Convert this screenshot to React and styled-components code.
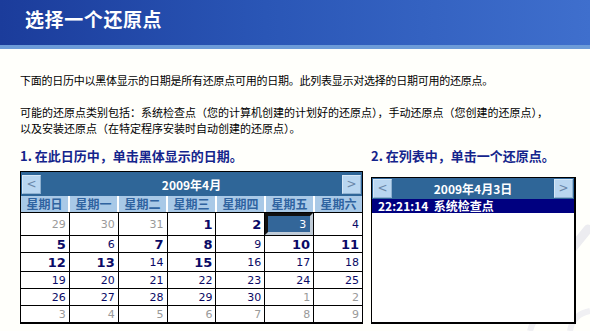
import React from 'react';
import styled, { createGlobalStyle } from 'styled-components';

const Global = createGlobalStyle`
  html, body { margin: 0; padding: 0; }
  body {
    background: #fffffb;
    font-family: "Noto Sans CJK SC", "DejaVu Sans", sans-serif;
    overflow: hidden;
  }
`;

const Page = styled.div`
  position: relative;
  width: 590px;
  height: 331px;
  overflow: hidden;
`;

const Header = styled.header`
  height: 37px;
  padding: 0 0 8px 25px;
  box-sizing: content-box;
  background: linear-gradient(to right, #1b3c9b 0%, #2a56b6 45%, #3f6fcd 100%);
  border-bottom: 4px solid #6c9bd8;
  display: flex;
  align-items: center;
  color: #fff;
  font-size: 19px;
  font-weight: 700;
  letter-spacing: 0.6px;
`;

const Body = styled.main`
  position: relative;
  z-index: 1;
  padding: 0 14px 0 20px;
`;

const Para = styled.p`
  margin: ${p => p.$top}px 0 0;
  font-size: 11px;
  line-height: 16px;
  color: #000;
  white-space: nowrap;
  letter-spacing: ${p => p.$ls || 0}px;
`;

const Columns = styled.div`
  display: flex;
  gap: 8px;
  margin-top: 12px;
`;

const Column = styled.section`
  width: ${p => p.$w}px;
  display: flex;
  flex-direction: column;
`;

const Label = styled.div`
  font-size: 13px;
  line-height: 16px;
  font-weight: 700;
  color: #14248c;
  white-space: nowrap;
  margin-bottom: ${p => p.$gap}px;
`;

const Calendar = styled.div`
  border: 1px solid #000;
  border-bottom-width: 2px;
  background: #fff;
`;

const TitleBar = styled.div`
  height: 24px;
  background: #2f6698;
  display: flex;
  align-items: center;
  justify-content: space-between;
  padding: 0 1px;
  color: #fff;
  font-size: 12px;
  font-weight: 700;
`;

const NavBtn = styled.div`
  width: 19px;
  height: 19px;
  box-sizing: border-box;
  background: #b9d6f0;
  border: 1px solid #d6e7f6;
  border-right-color: #8fb1d0;
  border-bottom-color: #8fb1d0;
  color: #6a87a8;
  font-family: "DejaVu Sans", sans-serif;
  font-size: 12px;
  line-height: 16px;
  text-align: center;
  font-weight: 400;
`;

const DayHead = styled.div`
  display: grid;
  grid-template-columns: repeat(7, 1fr);
  column-gap: 2px;
  background: #fff;
  border-bottom: 1px solid #000;
`;

const DayName = styled.div`
  height: 16px;
  background: #a9c9e7;
  color: #2f63a0;
  font-size: 12px;
  font-weight: 700;
  line-height: 16px;
  text-align: center;
`;

const Dates = styled.div`
  display: grid;
  grid-template-columns: repeat(7, 1fr);
  grid-template-rows: 22px 16px 18px 16px 16px 16px;
  gap: 1px;
  background: #000;
`;

const DateCell = styled.div`
  background: ${p => (p.$sel ? '#336699' : '#fff')};
  color: ${p => (p.$sel ? '#fff' : p.$other ? '#9a9a9a' : '#0a0a66')};
  font-family: "DejaVu Sans", sans-serif;
  font-size: ${p => (p.$bold ? 13 : 11)}px;
  font-weight: ${p => (p.$bold ? 700 : 400)};
  display: flex;
  align-items: center;
  justify-content: flex-end;
  padding-right: 3px;
  box-sizing: border-box;
  ${p => p.$sel && `
    border: 3px solid #c0ccd8;
    border-top-color: #111;
    border-left-color: #111;
    padding-right: 4px;
  `}
`;

const ListBox = styled.div`
  height: 144px;
  border: 1px solid #000;
  border-right-width: 2px;
  border-bottom-width: 2px;
  background: #fff;
`;

const ListTitle = styled(TitleBar)`
  height: 21px;
`;

const ListItem = styled.div`
  height: 14px;
  background: #000080;
  color: #fff;
  font-size: 12px;
  font-weight: 700;
  line-height: 14px;
  padding-left: 6px;
  white-space: pre;
`;

const Watermark = styled.svg`
  position: absolute;
  right: 0;
  bottom: 0;
  z-index: 0;
`;

const days = ['星期日', '星期一', '星期二', '星期三', '星期四', '星期五', '星期六'];

// o = other month, b = bold (has restore point), s = selected
const weeks = [
  [[29, 'o'], [30, 'o'], [31, 'o'], [1, 'b'], [2, 'b'], [3, 's'], [4]],
  [[5, 'b'], [6], [7, 'b'], [8, 'b'], [9], [10, 'b'], [11, 'b']],
  [[12, 'b'], [13, 'b'], [14], [15, 'b'], [16], [17], [18]],
  [[19], [20], [21], [22], [23], [24], [25]],
  [[26], [27], [28], [29], [30], [1, 'o'], [2, 'o']],
  [[3, 'o'], [4, 'o'], [5, 'o'], [6, 'o'], [7, 'o'], [8, 'o'], [9, 'o']],
];

export default function App() {
  return (
    <Page>
      <Global />
      <Watermark width="90" height="110" viewBox="0 0 90 110">
        <path d="M88 8 C70 30 58 45 48 60" stroke="#ececf0" strokeWidth="9" fill="none" strokeLinecap="round" />
        <path d="M30 110 C34 95 44 88 56 86" stroke="#f0f0f3" strokeWidth="6" fill="none" />
        <path d="M70 110 C72 98 80 92 90 90" stroke="#f0f0f3" strokeWidth="6" fill="none" />
      </Watermark>
      <Header>选择一个还原点</Header>
      <Body>
        <Para $top={23} $ls={-0.25}>下面的日历中以黑体显示的日期是所有还原点可用的日期。此列表显示对选择的日期可用的还原点。</Para>
        <Para $top={16}>
          可能的还原点类别包括：系统检查点（您的计算机创建的计划好的还原点），手动还原点（您创建的还原点），
          <br />
          以及安装还原点（在特定程序安装时自动创建的还原点）。
        </Para>
        <Columns>
          <Column $w={343}>
            <Label $gap={7}>1. 在此日历中，单击黑体显示的日期。</Label>
            <Calendar>
              <TitleBar>
                <NavBtn>&lt;</NavBtn>
                <span>2009年4月</span>
                <NavBtn>&gt;</NavBtn>
              </TitleBar>
              <DayHead>
                {days.map(d => <DayName key={d}>{d}</DayName>)}
              </DayHead>
              <Dates>
                {weeks.flat().map(([n, f], i) => (
                  <DateCell key={i} $bold={f === 'b'} $other={f === 'o'} $sel={f === 's'}>
                    {n}
                  </DateCell>
                ))}
              </Dates>
            </Calendar>
          </Column>
          <Column $w={205}>
            <Label $gap={13}>2. 在列表中，单击一个还原点。</Label>
            <ListBox>
              <ListTitle>
                <NavBtn>&lt;</NavBtn>
                <span>2009年4月3日</span>
                <NavBtn>&gt;</NavBtn>
              </ListTitle>
              <ListItem>22:21:14  系统检查点</ListItem>
            </ListBox>
          </Column>
        </Columns>
      </Body>
    </Page>
  );
}
